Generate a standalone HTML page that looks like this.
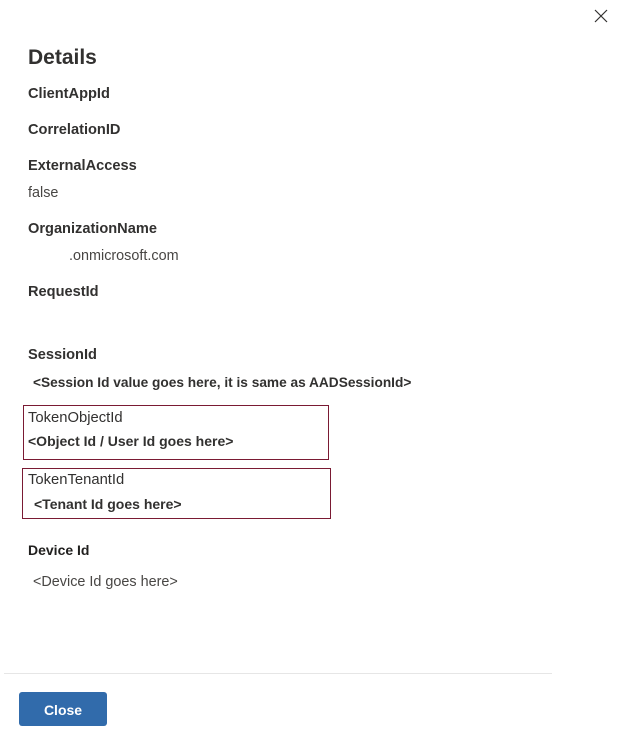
<!DOCTYPE html>
<html><head><meta charset="utf-8"><style>
body{margin:0;width:617px;height:738px;background:#fff;position:relative;overflow:hidden;font-family:"Liberation Sans",sans-serif;color:#323130}
.t{position:absolute;line-height:18px;font-size:14px;white-space:nowrap}
.l{font-weight:600;color:#323130;font-size:14.6px}
.v{color:#484644;font-size:14.4px}
.b{position:absolute;border:1px solid #7a1a33}
</style></head><body>
<svg style="position:absolute;left:594px;top:9px" width="14" height="14" viewBox="0 0 14 14"><path d="M1 1L13 13M13 1L1 13" stroke="#323130" stroke-width="1.2"/></svg>
<div class="t" style="left:28px;top:45px;font-size:21px;line-height:26px;font-weight:600">Details</div>
<div class="t l" style="left:28px;top:85px">ClientAppId</div>
<div class="t l" style="left:28px;top:121px">CorrelationID</div>
<div class="t l" style="left:28px;top:157px">ExternalAccess</div>
<div class="t v" style="left:28px;top:184px">false</div>
<div class="t l" style="left:28px;top:220px">OrganizationName</div>
<div class="t v" style="left:69px;top:247px">.onmicrosoft.com</div>
<div class="t l" style="left:28px;top:283px">RequestId</div>
<div class="t l" style="left:28px;top:346px">SessionId</div>
<div class="t" style="left:33px;top:374px;font-weight:600;font-size:13.7px">&lt;Session Id value goes here, it is same as AADSessionId&gt;</div>
<div class="b" style="left:23px;top:405px;width:304px;height:53px"></div>
<div class="t" style="left:28px;top:409px;font-size:14.8px">TokenObjectId</div>
<div class="t" style="left:28px;top:432px;font-weight:600">&lt;Object Id / User Id goes here&gt;</div>
<div class="b" style="left:22px;top:468px;width:307px;height:49px"></div>
<div class="t" style="left:28px;top:471px;font-size:14.8px">TokenTenantId</div>
<div class="t" style="left:34px;top:495px;font-weight:600">&lt;Tenant Id goes here&gt;</div>
<div class="t" style="left:28px;top:541px;font-weight:bold;color:#201f1e">Device Id</div>
<div class="t v" style="left:33px;top:573px">&lt;Device Id goes here&gt;</div>
<div style="position:absolute;left:4px;top:673px;width:548px;height:1px;background:#e6e6e6"></div>
<div style="position:absolute;left:19px;top:692px;width:88px;height:34px;background:#316bab;border-radius:3px;color:#fff;font-weight:600;font-size:14px;line-height:36px;text-align:center">Close</div>
</body></html>
